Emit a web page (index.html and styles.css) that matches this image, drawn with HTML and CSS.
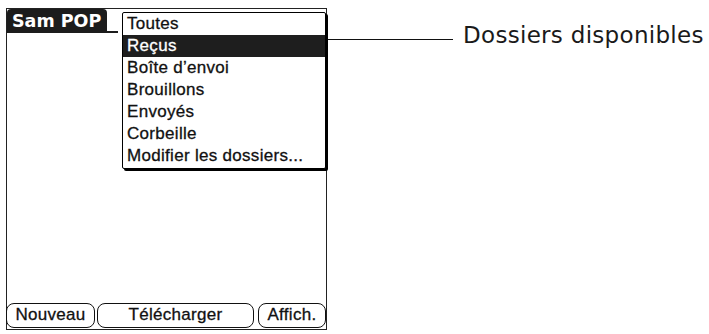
FILE: index.html
```html
<!DOCTYPE html>
<html lang="fr">
<head>
<meta charset="utf-8">
<title>Dossiers disponibles</title>
<link rel="stylesheet" href="styles.css">
</head>
<body>
<div class="page">
  <div class="device">
    <div class="titlebar">
      <div class="tab">Sam POP</div>
      <div class="underline"></div>
    </div>
    <ul class="menu">
      <li class="item">Toutes</li>
      <li class="item selected">Reçus</li>
      <li class="item">Boîte d’envoi</li>
      <li class="item">Brouillons</li>
      <li class="item">Envoyés</li>
      <li class="item">Corbeille</li>
      <li class="item">Modifier les dossiers...</li>
    </ul>
    <div class="buttons">
      <div class="btn btn-new">Nouveau</div>
      <div class="btn btn-dl">Télécharger</div>
      <div class="btn btn-view">Affich.</div>
    </div>
  </div>
  <div class="callout">
    <div class="leader"></div>
    <div class="label">Dossiers disponibles</div>
  </div>
</div>
</body>
</html>
```
FILE: styles.css
```css
* { box-sizing: border-box; }
html, body { margin: 0; padding: 0; background: #fff; }
body { font-family: "Liberation Sans", Arial, sans-serif; color: #111; }

.page {
  display: flex;
  align-items: flex-start;
  padding: 8px 0 0 6px;
}

.device {
  position: relative;
  width: 321px;
  height: 322px;
  border: 1px solid #222;
  display: flex;
  flex-direction: column;
}

.titlebar {
  display: flex;
  align-items: flex-end;
  height: 24px;
}

.tab {
  height: 24px;
  width: 100px;
  background: #1c1c1c;
  color: #fff;
  font-family: "DejaVu Sans", sans-serif;
  font-weight: bold;
  font-size: 17.5px;
  line-height: 24px;
  padding-left: 5px;
  border-radius: 4px 4px 0 0;
  white-space: nowrap;
}

.underline {
  width: 11px;
  height: 2px;
  background: #1c1c1c;
}

.menu {
  position: absolute;
  left: 115px;
  top: 3px;
  width: 204px;
  margin: 0;
  padding: 0 0 1px 0;
  list-style: none;
  background: #fff;
  border: 1px solid #000;
  border-radius: 2px;
  box-shadow: 2px 2px 0 #000;
}

.item {
  height: 22px;
  line-height: 22px;
  padding-left: 4px;
  font-size: 17px;
  letter-spacing: 0.3px;
  -webkit-text-stroke: 0.3px #111;
  white-space: nowrap;
}

.item.selected {
  background: #1e1e1e;
  color: #fff;
  -webkit-text-stroke: 0.3px #fff;
}

.buttons {
  margin: auto 0 1px -1px;
  display: flex;
  height: 25px;
}

.btn {
  height: 25px;
  border: 1.5px solid #111;
  border-radius: 8px;
  font-size: 17px;
  letter-spacing: 0.3px;
  -webkit-text-stroke: 0.3px #111;
  line-height: 22px;
  text-align: center;
  white-space: nowrap;
}

.btn-new { width: 89px; }
.btn-dl { width: 157px; margin-left: 2px; }
.btn-view { width: 68px; margin-left: 4px; }

.callout {
  display: flex;
  align-items: flex-start;
  margin-top: 16px;
  margin-left: 1px;
}

.leader {
  width: 125px;
  height: 1px;
  margin-top: 15px;
  background: #111;
}

.label {
  margin-left: 10px;
  font-family: "DejaVu Sans", sans-serif;
  font-size: 23px;
  line-height: 23px;
  letter-spacing: 0.3px;
  color: #1a1a1a;
  white-space: nowrap;
}
```
